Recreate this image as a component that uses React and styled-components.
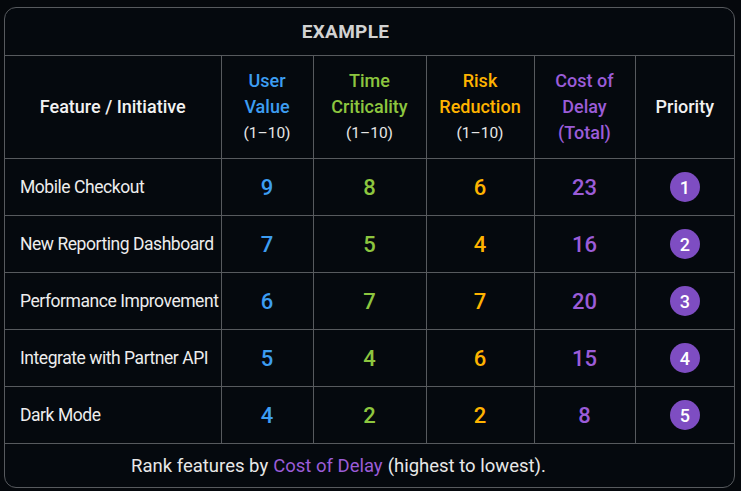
import styled, { createGlobalStyle } from "styled-components";

const Global = createGlobalStyle`
  html, body { margin: 0; background: #05080c; }
  body { font-family: Roboto, "Liberation Sans", sans-serif; }
`;

const colors = {
  blue: "#3d9df2",
  green: "#8dc63f",
  orange: "#ffb300",
  purple: "#9b5cd8",
  white: "#f2f2f2",
};

const Page = styled.div`
  width: 741px;
  height: 491px;
  padding: 7px 6px 6px 4px;
  box-sizing: border-box;
`;

const Panel = styled.div`
  border: 1px solid #575a5e;
  border-radius: 12px;
  overflow: hidden;
  background: #05090e;
`;

const Title = styled.div`
  height: 47px;
  display: flex;
  align-items: center;
  justify-content: center;
  padding-right: 48px;
  color: #d2d2d2;
  font-size: 19px;
  font-weight: 700;
  letter-spacing: 0.3px;
  border-bottom: 1px solid #575a5e;
`;

const Table = styled.table`
  width: 100%;
  border-collapse: collapse;
  table-layout: fixed;
`;

const Th = styled.th`
  height: 102px;
  padding: 0;
  font-size: 18px;
  font-weight: 500;
  line-height: 26px;
  color: ${(p) => colors[p.$tone] || colors.white};
  border-right: 1px solid #575a5e;
  border-bottom: 1px solid #575a5e;
  &:last-child { border-right: none; }
`;

const Range = styled.span`
  display: block;
  color: #e6e6e6;
  font-weight: 400;
  font-size: 15.5px;
`;

const Td = styled.td`
  height: 56px;
  padding: 0;
  text-align: center;
  font-size: 22px;
  font-weight: 500;
  color: ${(p) => colors[p.$tone] || colors.white};
  border-right: 1px solid #575a5e;
  border-bottom: 1px solid #575a5e;
  &:last-child { border-right: none; }
`;

const Name = styled(Td)`
  text-align: left;
  padding-left: 15px;
  font-size: 17.5px;
  font-weight: 400;
  letter-spacing: -0.45px;
  white-space: nowrap;
  color: #ededed;
`;

const Badge = styled.span`
  display: inline-flex;
  width: 30px;
  height: 30px;
  border-radius: 50%;
  background: #7e4dc2;
  color: #fff;
  font-size: 18px;
  align-items: center;
  justify-content: center;
`;

const Footer = styled.div`
  height: 43px;
  display: flex;
  align-items: center;
  justify-content: center;
  padding-right: 62px;
  font-size: 18.5px;
  color: #e8e8e8;
`;

const Accent = styled.span`
  color: ${colors.purple};
  margin: 0 5px;
`;

const rows = [
  ["Mobile Checkout", 9, 8, 6, 23, 1],
  ["New Reporting Dashboard", 7, 5, 4, 16, 2],
  ["Performance Improvement", 6, 7, 7, 20, 3],
  ["Integrate with Partner API", 5, 4, 6, 15, 4],
  ["Dark Mode", 4, 2, 2, 8, 5],
];

export default function App() {
  return (
    <Page>
      <Global />
      <Panel>
        <Title>EXAMPLE</Title>
        <Table>
          <colgroup>
            <col style={{ width: 216 }} />
            <col style={{ width: 92 }} />
            <col style={{ width: 113 }} />
            <col style={{ width: 108 }} />
            <col style={{ width: 101 }} />
            <col />
          </colgroup>
          <thead>
            <tr>
              <Th>Feature / Initiative</Th>
              <Th $tone="blue">User<br />Value<Range>(1–10)</Range></Th>
              <Th $tone="green">Time<br />Criticality<Range>(1–10)</Range></Th>
              <Th $tone="orange">Risk<br />Reduction<Range>(1–10)</Range></Th>
              <Th $tone="purple">Cost of<br />Delay<br />(Total)</Th>
              <Th>Priority</Th>
            </tr>
          </thead>
          <tbody>
            {rows.map(([name, uv, tc, rr, cod, pr]) => (
              <tr key={name}>
                <Name>{name}</Name>
                <Td $tone="blue">{uv}</Td>
                <Td $tone="green">{tc}</Td>
                <Td $tone="orange">{rr}</Td>
                <Td $tone="purple">{cod}</Td>
                <Td><Badge>{pr}</Badge></Td>
              </tr>
            ))}
          </tbody>
        </Table>
        <Footer>
          Rank features by<Accent>Cost of Delay</Accent>(highest to lowest).
        </Footer>
      </Panel>
    </Page>
  );
}
